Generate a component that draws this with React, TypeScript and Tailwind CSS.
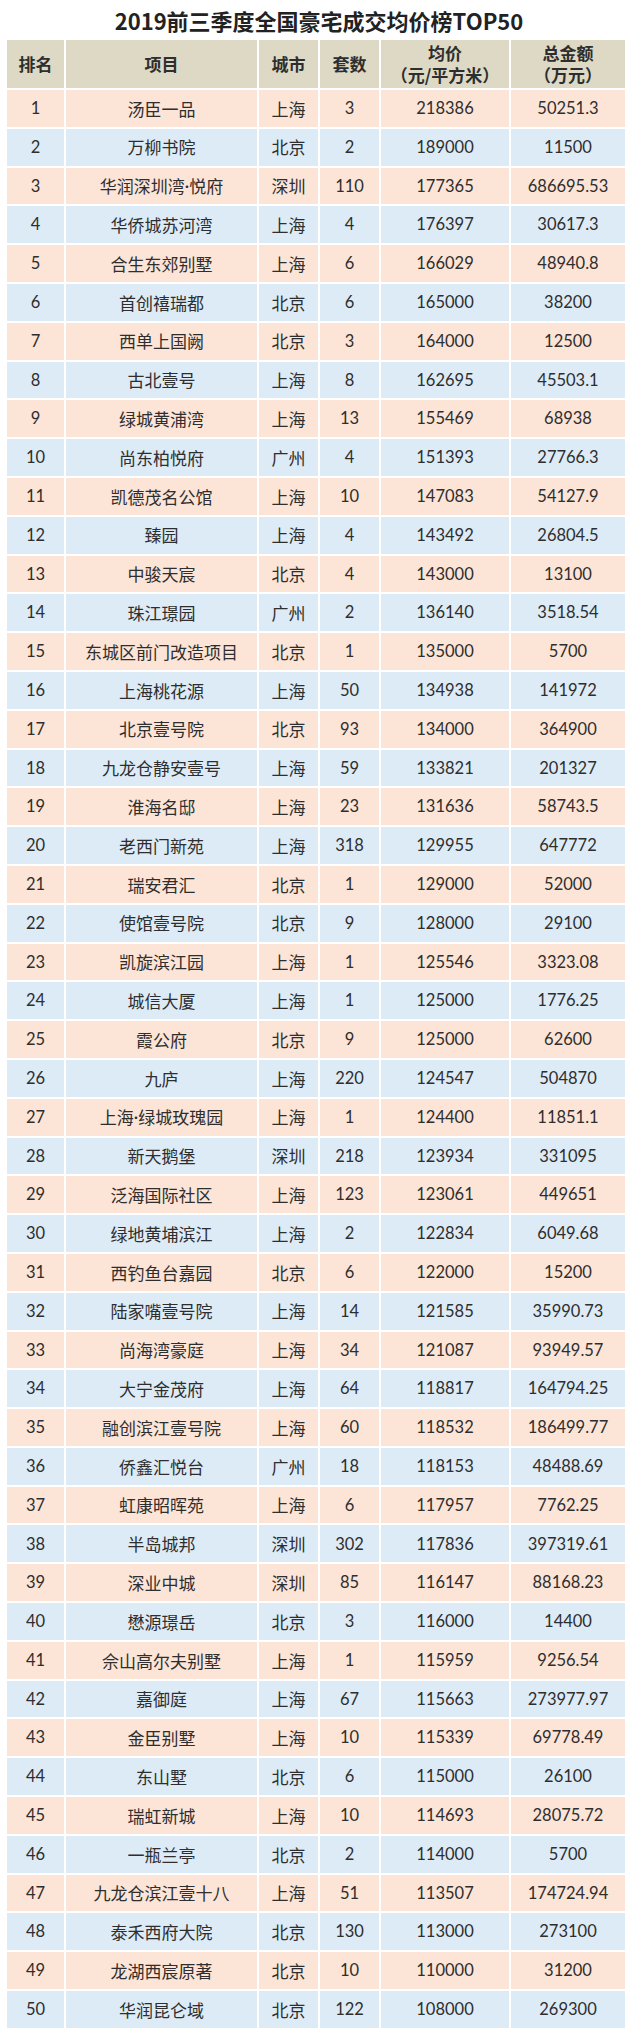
const rows: [string, string, string, string, string][] = [
  ["汤臣一品", "上海", "3", "218386", "50251.3"],
  ["万柳书院", "北京", "2", "189000", "11500"],
  ["华润深圳湾·悦府", "深圳", "110", "177365", "686695.53"],
  ["华侨城苏河湾", "上海", "4", "176397", "30617.3"],
  ["合生东郊别墅", "上海", "6", "166029", "48940.8"],
  ["首创禧瑞都", "北京", "6", "165000", "38200"],
  ["西单上国阙", "北京", "3", "164000", "12500"],
  ["古北壹号", "上海", "8", "162695", "45503.1"],
  ["绿城黄浦湾", "上海", "13", "155469", "68938"],
  ["尚东柏悦府", "广州", "4", "151393", "27766.3"],
  ["凯德茂名公馆", "上海", "10", "147083", "54127.9"],
  ["臻园", "上海", "4", "143492", "26804.5"],
  ["中骏天宸", "北京", "4", "143000", "13100"],
  ["珠江璟园", "广州", "2", "136140", "3518.54"],
  ["东城区前门改造项目", "北京", "1", "135000", "5700"],
  ["上海桃花源", "上海", "50", "134938", "141972"],
  ["北京壹号院", "北京", "93", "134000", "364900"],
  ["九龙仓静安壹号", "上海", "59", "133821", "201327"],
  ["淮海名邸", "上海", "23", "131636", "58743.5"],
  ["老西门新苑", "上海", "318", "129955", "647772"],
  ["瑞安君汇", "北京", "1", "129000", "52000"],
  ["使馆壹号院", "北京", "9", "128000", "29100"],
  ["凯旋滨江园", "上海", "1", "125546", "3323.08"],
  ["城信大厦", "上海", "1", "125000", "1776.25"],
  ["霞公府", "北京", "9", "125000", "62600"],
  ["九庐", "上海", "220", "124547", "504870"],
  ["上海·绿城玫瑰园", "上海", "1", "124400", "11851.1"],
  ["新天鹅堡", "深圳", "218", "123934", "331095"],
  ["泛海国际社区", "上海", "123", "123061", "449651"],
  ["绿地黄埔滨江", "上海", "2", "122834", "6049.68"],
  ["西钓鱼台嘉园", "北京", "6", "122000", "15200"],
  ["陆家嘴壹号院", "上海", "14", "121585", "35990.73"],
  ["尚海湾豪庭", "上海", "34", "121087", "93949.57"],
  ["大宁金茂府", "上海", "64", "118817", "164794.25"],
  ["融创滨江壹号院", "上海", "60", "118532", "186499.77"],
  ["侨鑫汇悦台", "广州", "18", "118153", "48488.69"],
  ["虹康昭晖苑", "上海", "6", "117957", "7762.25"],
  ["半岛城邦", "深圳", "302", "117836", "397319.61"],
  ["深业中城", "深圳", "85", "116147", "88168.23"],
  ["懋源璟岳", "北京", "3", "116000", "14400"],
  ["佘山高尔夫别墅", "上海", "1", "115959", "9256.54"],
  ["嘉御庭", "上海", "67", "115663", "273977.97"],
  ["金臣别墅", "上海", "10", "115339", "69778.49"],
  ["东山墅", "北京", "6", "115000", "26100"],
  ["瑞虹新城", "上海", "10", "114693", "28075.72"],
  ["一瓶兰亭", "北京", "2", "114000", "5700"],
  ["九龙仓滨江壹十八", "上海", "51", "113507", "174724.94"],
  ["泰禾西府大院", "北京", "130", "113000", "273100"],
  ["龙湖西宸原著", "北京", "10", "110000", "31200"],
  ["华润昆仑域", "北京", "122", "108000", "269300"],
];

const cols = "grid grid-cols-[57px_191px_59px_59px_128px_114px] gap-x-[2px]";
const cell = "flex items-center justify-center";
const num = "font-['Lato','Noto_Sans_CJK_SC',sans-serif] text-[16.5px]";
const cjk = "font-['Noto_Sans_CJK_SC',sans-serif] text-[17px]";

// the middle dot is narrow in the picture, so it gets a latin font
const Name = ({ text }: { text: string }) => {
  const parts = text.split("·");
  if (parts.length === 1) return <>{text}</>;
  return (
    <>
      {parts[0]}
      <span className="font-['Lato',sans-serif]">·</span>
      {parts[1]}
    </>
  );
};

export default function App() {
  return (
    <div className="w-[632px] bg-white pb-[7px] text-[#2e2e2e]">
      <h1 className="flex h-[40px] items-center justify-center pl-[6px] font-['Noto_Sans_CJK_SC',sans-serif] text-[22px] font-bold leading-none text-[#222222]">
        2019前三季度全国豪宅成交均价榜TOP50
      </h1>
      <div className="flex flex-col gap-y-[2px] px-[7px]">
        <div className={`${cols} h-[48px] font-['Noto_Sans_CJK_SC',sans-serif] text-[17px] font-bold leading-[22px]`}>
          <div className={`${cell} bg-[#ddd9c4]`}>排名</div>
          <div className={`${cell} bg-[#ddd9c4]`}>项目</div>
          <div className={`${cell} bg-[#ddd9c4]`}>城市</div>
          <div className={`${cell} bg-[#ddd9c4]`}>套数</div>
          <div className={`${cell} flex-col bg-[#ddd9c4]`}>
            <span>均价</span>
            <span>（元/平方米）</span>
          </div>
          <div className={`${cell} flex-col bg-[#ddd9c4]`}>
            <span>总金额</span>
            <span>（万元）</span>
          </div>
        </div>
        {rows.map((r, i) => {
          const bg = i % 2 === 0 ? "bg-[#fce4d6]" : "bg-[#ddebf7]";
          return (
            <div key={i} className={`${cols} h-[36.8px]`}>
              <div className={`${cell} ${bg} ${num}`}>{i + 1}</div>
              <div className={`${cell} ${bg} ${cjk}`}>
                <Name text={r[0]} />
              </div>
              <div className={`${cell} ${bg} ${cjk}`}>{r[1]}</div>
              <div className={`${cell} ${bg} ${num}`}>{r[2]}</div>
              <div className={`${cell} ${bg} ${num}`}>{r[3]}</div>
              <div className={`${cell} ${bg} ${num}`}>{r[4]}</div>
            </div>
          );
        })}
      </div>
    </div>
  );
}
